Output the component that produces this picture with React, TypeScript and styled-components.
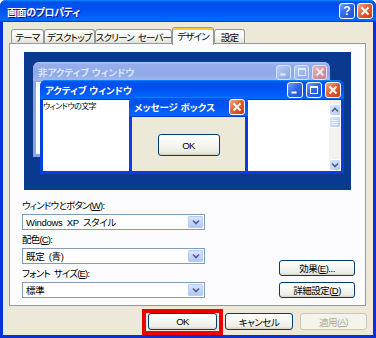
import React from 'react';
import styled, { createGlobalStyle, css } from 'styled-components';

const GlobalStyle = createGlobalStyle`
  * { box-sizing: border-box; }
  html, body { margin: 0; padding: 0; background: #ffffff; }
  body {
    font-family: "Liberation Sans", "Noto Sans CJK JP", sans-serif;
    font-size: 9px;
    letter-spacing: -0.8px;
    font-feature-settings: "palt" 1;
    color: #000000;
  }
`;

const Dialog = styled.div`
  width: 376px;
  height: 338px;
  display: flex;
  flex-direction: column;
  background: #0831d9;
  border-radius: 6px 6px 0 0;
  overflow: hidden;
`;

const xpCaption = css`
  background: linear-gradient(180deg, #0997ff 0%, #0053ee 8%, #0050ee 40%, #0066ff 88%, #0066ff 93%, #005bff 95%, #003dd7 96%, #003dd7 100%);
`;

const TitleBar = styled.div`
  flex: none;
  height: 22px;
  display: flex;
  align-items: center;
  padding: 0 3px 0 7px;
  ${xpCaption}
`;

const TitleText = styled.span`
  flex: 1;
  color: #ffffff;
  font-weight: bold;
  font-size: 10px;
  letter-spacing: -0.4px;
  text-shadow: 1px 1px #0f1089;
  white-space: nowrap;
`;

const CaptionButtons = styled.div<{ $gap: number }>`
  display: flex;
  gap: ${p => p.$gap}px;
`;

type Kind = 'help' | 'min' | 'max' | 'close';

const CapButton = styled.div<{ $kind: Kind; $size: number; $dim?: boolean }>`
  width: ${p => p.$size}px;
  height: ${p => p.$size}px;
  border-radius: 3px;
  border: 1px solid ${p => (p.$dim ? '#d9e3f9' : '#ffffff')};
  display: flex;
  align-items: center;
  justify-content: center;
  color: #ffffff;
  font-weight: bold;
  font-size: 12px;
  letter-spacing: 0;
  line-height: 1;
  background: ${p =>
    p.$kind === 'close'
      ? p.$dim
        ? 'linear-gradient(135deg, #e8b4b6 0%, #d68f95 60%, #c97c86 100%)'
        : 'linear-gradient(135deg, #f5a889 0%, #e3623b 45%, #c73c12 100%)'
      : p.$dim
        ? 'linear-gradient(135deg, #bccdf4 0%, #9ab2ee 60%, #8aa4e8 100%)'
        : 'linear-gradient(135deg, #7aa4fa 0%, #3068ea 45%, #1c50d6 100%)'};
`;

const Glyph = ({ kind, dim }: { kind: Kind; dim?: boolean }) => {
  const c = dim ? '#e6edfb' : '#ffffff';
  if (kind === 'help') return <span>?</span>;
  if (kind === 'close')
    return (
      <svg width="10" height="10" viewBox="0 0 10 10">
        <path d="M1.5 1.5 L8.5 8.5 M8.5 1.5 L1.5 8.5" stroke={c} strokeWidth="2" />
      </svg>
    );
  if (kind === 'min')
    return (
      <svg width="10" height="10" viewBox="0 0 10 10">
        <rect x="1.5" y="6.5" width="5" height="2" fill={c} />
      </svg>
    );
  return (
    <svg width="10" height="10" viewBox="0 0 10 10">
      <rect x="1.5" y="1.5" width="7" height="7" fill="none" stroke={c} strokeWidth="1" />
      <rect x="1" y="1" width="8" height="2" fill={c} />
    </svg>
  );
};

const Client = styled.div`
  flex: 1;
  margin: 0 3px 3px;
  background: #ece9d8;
  display: flex;
  flex-direction: column;
  padding: 5px 7px 0 6px;
`;

const TabRow = styled.div`
  display: flex;
  align-items: flex-end;
  height: 16px;
  padding-left: 2px;
  position: relative;
  z-index: 1;
`;

const Tab = styled.div<{ $w: number; $active?: boolean }>`
  width: ${p => p.$w}px;
  height: ${p => (p.$active ? 18 : 14)}px;
  margin-bottom: ${p => (p.$active ? -2 : 0)}px;
  display: flex;
  align-items: center;
  justify-content: center;
  border: 1px solid #919b9c;
  border-bottom: none;
  border-radius: 3px 3px 0 0;
  white-space: nowrap;
  font-size: 9.5px;
  word-spacing: 2px;
  background: linear-gradient(180deg, #ffffff 0%, #f4f4f0 55%, #e3e2db 100%);
  ${p =>
    p.$active &&
    css`
      background: #fcfcfe;
      border-top: 1px solid #e68b2c;
      box-shadow: inset 0 2px #ffc73c;
      padding-top: 1px;
      padding-bottom: 2px;
    `}
`;

const Panel = styled.div`
  flex: none;
  height: 263px;
  border: 1px solid #919b9c;
  background: #fcfcfe;
  padding: 8px 10px 0 12px;
  display: flex;
  flex-direction: column;
`;

const Preview = styled.div`
  position: relative;
  width: 327px;
  height: 138px;
  margin-left: 2px;
  background: #0a3a90;
  overflow: hidden;
`;

const PreviewWin = styled.div<{ $active?: boolean }>`
  position: absolute;
  display: flex;
  flex-direction: column;
  border-radius: 6px 6px 0 0;
  overflow: hidden;
  background: ${p => (p.$active ? '#0a3ee0' : '#8ba4e6')};
`;

const InactiveWin = styled(PreviewWin)`
  left: 9px;
  top: 10px;
  width: 297px;
  height: 95px;
`;

const ActiveWin = styled(PreviewWin)`
  left: 16px;
  top: 28px;
  width: 304px;
  height: 94px;
`;

const MessageWin = styled(PreviewWin)`
  left: 105px;
  top: 45px;
  width: 119px;
  height: 77px;
`;

const Caption = styled.div<{ $active?: boolean }>`
  flex: none;
  height: 20px;
  display: flex;
  align-items: center;
  padding: 0 3px 0 5px;
  ${p =>
    p.$active
      ? xpCaption
      : css`
          background: linear-gradient(180deg, #b2c5f2 0%, #96aeea 12%, #8ea8e8 60%, #a0b6ec 90%, #8aa2e4 100%);
        `}
`;

const CaptionText = styled.span<{ $active?: boolean }>`
  flex: 1;
  font-weight: bold;
  font-size: 9.5px;
  letter-spacing: 0;
  color: ${p => (p.$active ? '#ffffff' : '#dbe5fa')};
  white-space: nowrap;
`;

const WinBody = styled.div<{ $fill: string }>`
  flex: 1;
  margin: 0 3px 3px;
  background: ${p => p.$fill};
  display: flex;
`;

const WinText = styled.div`
  flex: 1;
  font-size: 8px;
  letter-spacing: -0.6px;
  line-height: 10px;
  padding-top: 2px;
  white-space: nowrap;
`;

const ScrollBar = styled.div`
  width: 12px;
  display: flex;
  flex-direction: column;
  padding-top: 4px;
  background: #f3f2ed;
`;

const ScrollPart = styled.div<{ $grow?: boolean }>`
  height: ${p => (p.$grow ? 'auto' : '12px')};
  flex: ${p => (p.$grow ? 1 : 'none')};
  ${p =>
    !p.$grow &&
    css`
      border: 1px solid #ffffff;
      border-radius: 2px;
      background: linear-gradient(135deg, #dbe6fd 0%, #c3d4fa 60%, #b4c8f6 100%);
      display: flex;
      align-items: center;
      justify-content: center;
    `}
`;

const Chevron = ({ up }: { up?: boolean }) => (
  <svg width="8" height="6" viewBox="0 0 8 6">
    <polyline
      points={up ? '1,4.5 4,1.5 7,4.5' : '1,1.5 4,4.5 7,1.5'}
      fill="none"
      stroke="#4d6185"
      strokeWidth="1.6"
    />
  </svg>
);

const Grip = () => (
  <svg width="6" height="6" viewBox="0 0 6 6">
    <path d="M0 1.5 H6 M0 3.5 H6 M0 5.5 H6" stroke="#eef3fe" strokeWidth="1" />
  </svg>
);

const MsgBody = styled.div`
  flex: 1;
  margin: 0 3px 3px;
  background: #ece9d8;
  display: flex;
  justify-content: center;
  padding-top: 17px;
`;

const XpButton = styled.div<{ $w: number; $h: number; $disabled?: boolean }>`
  width: ${p => p.$w}px;
  height: ${p => p.$h}px;
  display: flex;
  align-items: center;
  justify-content: center;
  border: 1px solid #003c74;
  border-radius: 3px;
  background: linear-gradient(180deg, #ffffff 0%, #f5f5f1 50%, #ecebe6 86%, #d6d0c5 100%);
  white-space: nowrap;
  font-size: 9.5px;
  letter-spacing: -0.5px;
  ${p =>
    p.$disabled &&
    css`
      border-color: #c9c7ba;
      background: #f5f4ea;
      color: #aca899;
    `}
`;

const FormArea = styled.div`
  display: flex;
  justify-content: space-between;
  align-items: flex-end;
  margin-top: 10px;
`;

const Fields = styled.div`
  width: 183px;
  display: flex;
  flex-direction: column;
  gap: 4px;
`;

const Field = styled.div`
  display: flex;
  flex-direction: column;
  gap: 2px;
`;

const Label = styled.div`
  height: 12px;
  line-height: 12px;
  white-space: nowrap;
  font-size: 9.5px;
  word-spacing: 2px;
`;

const Select = styled.div`
  height: 16px;
  border: 1px solid #7f9db9;
  background: #ffffff;
  display: flex;
  align-items: center;
  justify-content: space-between;
  padding: 0 1px 0 3px;
  white-space: nowrap;
  font-size: 9.5px;
  letter-spacing: -0.3px;
  word-spacing: 2px;
`;

const DropButton = styled.div`
  width: 15px;
  height: 12px;
  border: 1px solid #b8cbf7;
  border-radius: 1px;
  background: linear-gradient(180deg, #d8e4fd 0%, #c2d3fb 60%, #b2c7f8 100%);
  display: flex;
  align-items: center;
  justify-content: center;
`;

const SideButtons = styled.div`
  display: flex;
  flex-direction: column;
  gap: 6px;
`;

const ButtonRow = styled.div`
  display: flex;
  justify-content: flex-end;
  gap: 7px;
  margin: 7px -1px 0 0;
`;

const Highlight = styled.div`
  position: relative;
  margin-right: 1px;
  &::after {
    content: '';
    position: absolute;
    left: -6px;
    right: -6px;
    top: -4px;
    bottom: -5px;
    border: 4px solid #ee0000;
    pointer-events: none;
  }
`;

const CaptionSet = ({ kinds, size, gap, dim }: { kinds: Kind[]; size: number; gap: number; dim?: boolean }) => (
  <CaptionButtons $gap={gap}>
    {kinds.map(k => (
      <CapButton key={k} $kind={k} $size={size} $dim={dim}>
        <Glyph kind={k} dim={dim} />
      </CapButton>
    ))}
  </CaptionButtons>
);

const tabs = [
  { label: 'テーマ', w: 33 },
  { label: 'デスクトップ', w: 51 },
  { label: 'スクリーン セーバー', w: 77 },
  { label: 'デザイン', w: 42, active: true },
  { label: '設定', w: 31 },
];

const App: React.FC = () => {
  return (
    <>
      <GlobalStyle />
      <Dialog>
        <TitleBar>
          <TitleText>画面のプロパティ</TitleText>
          <CaptionSet kinds={['help', 'close']} size={16} gap={2} />
        </TitleBar>
        <Client>
          <TabRow>
            {tabs.map(t => (
              <Tab key={t.label} $w={t.w} $active={t.active}>
                {t.label}
              </Tab>
            ))}
          </TabRow>
          <Panel>
            <Preview>
              <InactiveWin>
                <Caption>
                  <CaptionText>非アクティブ ウィンドウ</CaptionText>
                  <CaptionSet kinds={['min', 'max', 'close']} size={15} gap={3} dim />
                </Caption>
                <WinBody $fill="#ffffff" />
              </InactiveWin>
              <ActiveWin $active>
                <Caption $active>
                  <CaptionText $active>アクティブ ウィンドウ</CaptionText>
                  <CaptionSet kinds={['min', 'max', 'close']} size={16} gap={3} />
                </Caption>
                <WinBody $fill="#ffffff">
                  <WinText>ウィンドウの文字</WinText>
                  <ScrollBar>
                    <ScrollPart>
                      <Chevron up />
                    </ScrollPart>
                    <ScrollPart>
                      <Grip />
                    </ScrollPart>
                    <ScrollPart $grow />
                    <ScrollPart>
                      <Chevron />
                    </ScrollPart>
                  </ScrollBar>
                </WinBody>
              </ActiveWin>
              <MessageWin $active>
                <Caption $active>
                  <CaptionText $active>メッセージ ボックス</CaptionText>
                  <CaptionSet kinds={['close']} size={16} gap={0} />
                </Caption>
                <MsgBody>
                  <XpButton $w={62} $h={22}>OK</XpButton>
                </MsgBody>
              </MessageWin>
            </Preview>
            <FormArea>
              <Fields>
                <Field>
                  <Label>
                    ウィンドウとボタン(<u>W</u>):
                  </Label>
                  <Select>
                    Windows XP スタイル
                    <DropButton>
                      <Chevron />
                    </DropButton>
                  </Select>
                </Field>
                <Field>
                  <Label>
                    配色(<u>C</u>):
                  </Label>
                  <Select>
                    既定 (青)
                    <DropButton>
                      <Chevron />
                    </DropButton>
                  </Select>
                </Field>
                <Field>
                  <Label>
                    フォント サイズ(<u>E</u>):
                  </Label>
                  <Select>
                    標準
                    <DropButton>
                      <Chevron />
                    </DropButton>
                  </Select>
                </Field>
              </Fields>
              <SideButtons>
                <XpButton $w={76} $h={16}>
                  効果(<u>E</u>)...
                </XpButton>
                <XpButton $w={76} $h={16}>
                  詳細設定(<u>D</u>)
                </XpButton>
              </SideButtons>
            </FormArea>
          </Panel>
          <ButtonRow>
            <Highlight>
              <XpButton $w={69} $h={17}>OK</XpButton>
            </Highlight>
            <XpButton $w={68} $h={17}>キャンセル</XpButton>
            <XpButton $w={67} $h={17} $disabled>
              適用(<u>A</u>)
            </XpButton>
          </ButtonRow>
        </Client>
      </Dialog>
    </>
  );
};

export default App;
